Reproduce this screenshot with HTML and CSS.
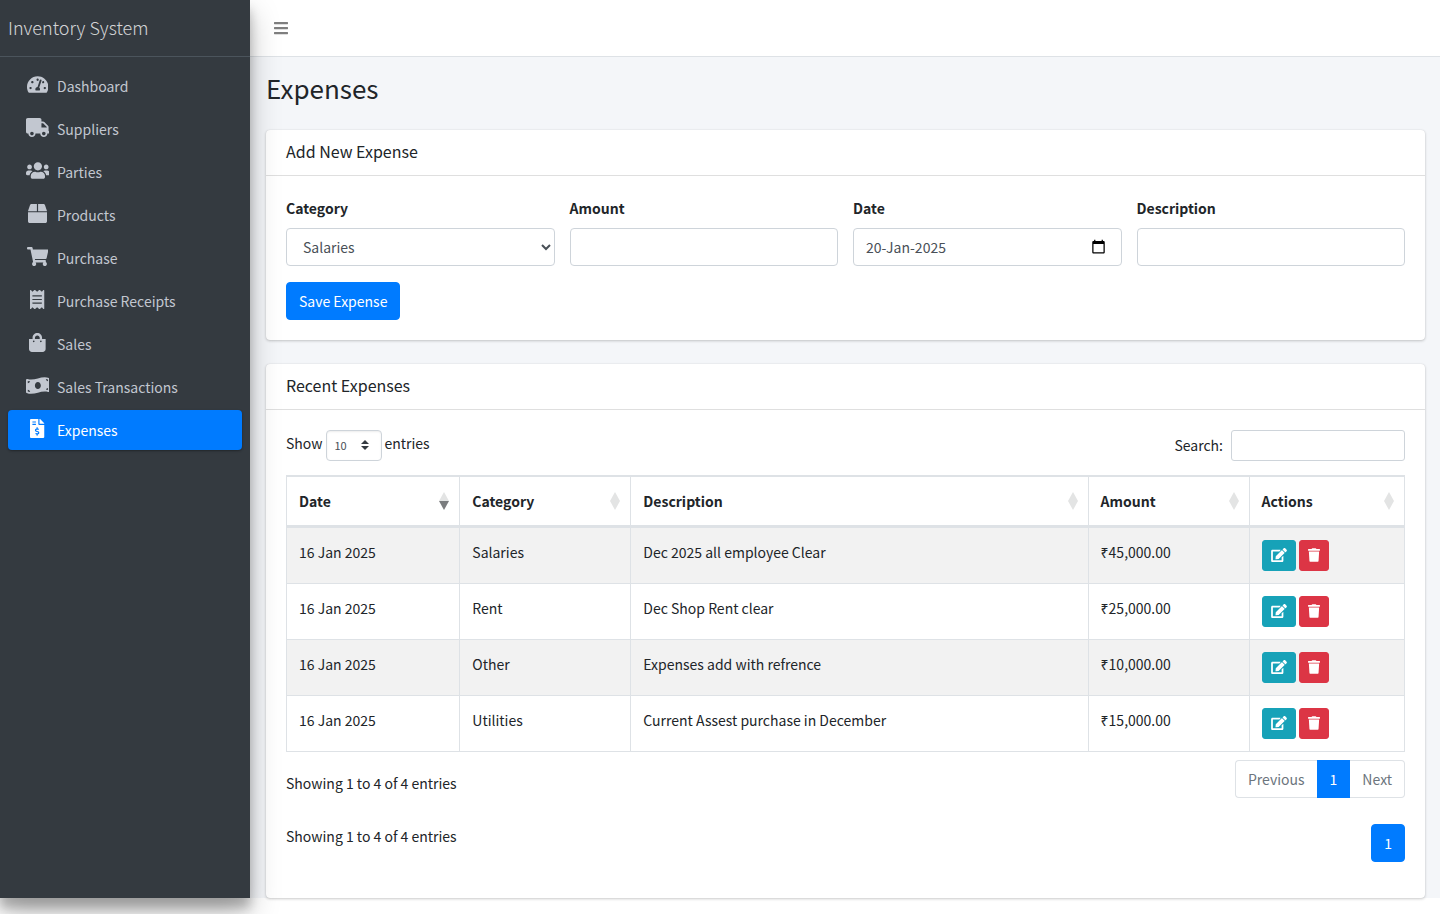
FILE: index.html
```html
<!DOCTYPE html>
<html lang="en">
<head>
<meta charset="utf-8">
<meta name="viewport" content="width=device-width, initial-scale=1">
<title>Expenses - Inventory System</title>
<link rel="stylesheet" href="styles.css">
</head>
<body>
<svg class="sprite" aria-hidden="true">
  <symbol id="i-edit" viewBox="0 0 576 512"><path d="M402.6 83.2l90.2 90.2c3.8 3.8 3.8 10 0 13.8L274.4 405.6l-92.8 10.3c-12.4 1.4-22.9-9.1-21.5-21.5l10.3-92.8L388.8 83.2c3.8-3.8 10-3.8 13.8 0zm162-22.9l-48.8-48.8c-15.2-15.2-39.9-15.2-55.2 0l-35.4 35.4c-3.8 3.8-3.8 10 0 13.8l90.2 90.2c3.8 3.8 10 3.8 13.8 0l35.4-35.4c15.2-15.3 15.2-40 0-55.2zM384 346.2V448H64V128h229.8c3.2 0 6.2-1.3 8.5-3.5l40-40c7.6-7.6 2.2-20.5-8.5-20.5H48C21.5 64 0 85.5 0 112v352c0 26.5 21.5 48 48 48h352c26.5 0 48-21.5 48-48V306.2c0-10.7-12.9-16-20.5-8.5l-40 40c-2.2 2.3-3.5 5.3-3.5 8.5z"/></symbol>
  <symbol id="i-trash" viewBox="0 0 448 512"><path d="M432 32H312l-9.4-18.7A24 24 0 0 0 281.1 0H166.8a23.72 23.72 0 0 0-21.4 13.3L136 32H16A16 16 0 0 0 0 48v32a16 16 0 0 0 16 16h416a16 16 0 0 0 16-16V48a16 16 0 0 0-16-16zM32 128l21.2 339a48 48 0 0 0 47.9 45h245.8a48 48 0 0 0 47.9-45L416 128z"/></symbol>
  <symbol id="i-sort" viewBox="0 0 10 18"><path class="up" d="M5 0L10 9H0z"/><path class="down" d="M0 9H10L5 18z"/></symbol>
</svg>
<div class="wrapper">
  <aside class="sidebar">
    <a class="brand" href="#">Inventory System</a>
    <nav class="menu">
      <a class="menu-link" href="#"><span class="menu-icon"><svg viewBox="0 0 576 512"><path d="M288 32C128.94 32 0 160.94 0 320c0 52.8 14.25 102.26 39.06 144.8 5.61 9.62 16.3 15.2 27.44 15.2h443c11.14 0 21.83-5.58 27.44-15.2C561.75 422.26 576 372.8 576 320c0-159.06-128.94-288-288-288zm0 64c14.71 0 26.58 10.13 30.32 23.65-1.11 2.26-2.64 4.23-3.45 6.67l-9.22 27.67c-5.13 3.49-10.97 6.01-17.64 6.01-17.67 0-32-14.33-32-32S270.33 96 288 96zM96 384c-17.67 0-32-14.33-32-32s14.33-32 32-32 32 14.33 32 32-14.33 32-32 32zm48-160c-17.67 0-32-14.33-32-32s14.33-32 32-32 32 14.33 32 32-14.33 32-32 32zm246.77-72.41l-61.33 184C343.13 347.33 352 364.54 352 384c0 11.72-3.38 22.55-8.88 32H232.88c-5.5-9.45-8.88-20.28-8.88-32 0-33.94 26.5-61.43 59.9-63.59l61.34-184.01c4.17-12.56 17.73-19.45 30.36-15.17 12.57 4.19 19.35 17.79 15.17 30.36zm14.66 57.2l15.52-46.55c3.47-1.29 7.13-2.23 11.05-2.23 17.67 0 32 14.33 32 32s-14.33 32-32 32c-11.38-.01-20.89-6.28-26.57-15.22zM480 384c-17.67 0-32-14.33-32-32s14.33-32 32-32 32 14.33 32 32-14.33 32-32 32z"/></svg></span>Dashboard</a>
      <a class="menu-link" href="#"><span class="menu-icon"><svg viewBox="0 0 640 512"><path d="M624 352h-16V243.9c0-12.7-5.1-24.9-14.1-33.9L494 110.1c-9-9-21.2-14.1-33.9-14.1H416V48c0-26.5-21.5-48-48-48H48C21.5 0 0 21.5 0 48v320c0 26.5 21.5 48 48 48h16c0 53 43 96 96 96s96-43 96-96h128c0 53 43 96 96 96s96-43 96-96h48c8.8 0 16-7.2 16-16v-32c0-8.8-7.2-16-16-16zM160 464c-26.5 0-48-21.5-48-48s21.5-48 48-48 48 21.5 48 48-21.5 48-48 48zm320 0c-26.5 0-48-21.5-48-48s21.5-48 48-48 48 21.5 48 48-21.5 48-48 48zm80-208H416V144h44.1l99.9 99.9V256z"/></svg></span>Suppliers</a>
      <a class="menu-link" href="#"><span class="menu-icon"><svg viewBox="0 0 640 512"><path d="M96 224c35.3 0 64-28.7 64-64s-28.7-64-64-64-64 28.7-64 64 28.7 64 64 64zm448 0c35.3 0 64-28.7 64-64s-28.7-64-64-64-64 28.7-64 64 28.7 64 64 64zm32 32h-64c-17.6 0-33.5 7.1-45.1 18.6 40.3 22.1 68.9 62 75.1 109.4h66c17.7 0 32-14.3 32-32v-32c0-35.3-28.7-64-64-64zm-256 0c61.9 0 112-50.1 112-112S381.9 32 320 32 208 82.1 208 144s50.1 112 112 112zm76.8 32h-8.3c-20.8 10-43.9 16-68.5 16s-47.6-6-68.5-16h-8.3C179.6 288 128 339.6 128 403.2V432c0 26.5 21.5 48 48 48h288c26.5 0 48-21.5 48-48v-28.8c0-63.6-51.6-115.2-115.2-115.2zm-223.7-13.4C161.5 263.1 145.6 256 128 256H64c-35.3 0-64 28.7-64 64v32c0 17.7 14.3 32 32 32h65.9c6.3-47.4 34.9-87.3 75.2-109.4z"/></svg></span>Parties</a>
      <a class="menu-link" href="#"><span class="menu-icon"><svg viewBox="0 0 512 512"><path d="M509.5 184.6L458.9 32.8C452.4 13.2 434.1 0 413.4 0H272v192h238.7c-.4-2.5-.4-5-1.2-7.4zM240 0H98.6c-20.7 0-39 13.2-45.5 32.8L2.5 184.6c-.8 2.4-.8 4.9-1.2 7.4H240V0zM0 224v240c0 26.5 21.5 48 48 48h416c26.5 0 48-21.5 48-48V224H0z"/></svg></span>Products</a>
      <a class="menu-link" href="#"><span class="menu-icon"><svg viewBox="0 0 576 512"><path d="M528.12 301.319l47.273-208C578.806 78.301 567.391 64 551.99 64H159.208l-9.166-44.81C147.758 8.021 137.93 0 126.529 0H24C10.745 0 0 10.745 0 24v16c0 13.255 10.745 24 24 24h69.883l70.248 343.435C147.325 417.1 136 435.222 136 456c0 30.928 25.072 56 56 56s56-25.072 56-56c0-15.674-6.447-29.835-16.824-40h209.647C430.447 426.165 424 440.326 424 456c0 30.928 25.072 56 56 56s56-25.072 56-56c0-22.172-12.888-41.332-31.579-50.405l5.517-24.276c3.413-15.018-8.002-29.319-23.403-29.319H218.117l-6.545-32h293.145c11.206 0 20.92-7.754 23.403-18.681z"/></svg></span>Purchase</a>
      <a class="menu-link" href="#"><span class="menu-icon"><svg viewBox="0 0 384 512"><path d="M358.4 3.2L320 48 265.6 3.2a15.9 15.9 0 0 0-19.2 0L192 48 137.6 3.2a15.9 15.9 0 0 0-19.2 0L64 48 25.6 3.2C15-4.7 0 2.8 0 16v480c0 13.2 15 20.7 25.6 12.8L64 464l54.4 44.8a15.9 15.9 0 0 0 19.2 0L192 464l54.4 44.8a15.9 15.9 0 0 0 19.2 0L320 464l38.4 44.8c10.5 7.9 25.6.4 25.6-12.8V16c0-13.2-15-20.7-25.6-12.8zM320 360c0 4.4-3.6 8-8 8H72c-4.4 0-8-3.6-8-8v-16c0-4.4 3.6-8 8-8h240c4.4 0 8 3.6 8 8v16zm0-96c0 4.4-3.6 8-8 8H72c-4.4 0-8-3.6-8-8v-16c0-4.4 3.6-8 8-8h240c4.4 0 8 3.6 8 8v16zm0-96c0 4.4-3.6 8-8 8H72c-4.4 0-8-3.6-8-8v-16c0-4.4 3.6-8 8-8h240c4.4 0 8 3.6 8 8v16z"/></svg></span>Purchase Receipts</a>
      <a class="menu-link" href="#"><span class="menu-icon"><svg viewBox="0 0 448 512"><path d="M352 160v-32C352 57.42 294.579 0 224 0 153.42 0 96 57.42 96 128v32H0v272c0 44.183 35.817 80 80 80h288c44.183 0 80-35.817 80-80V160h-96zm-192-32c0-35.29 28.71-64 64-64s64 28.71 64 64v32H160v-32zm160 120c-13.255 0-24-10.745-24-24s10.745-24 24-24 24 10.745 24 24-10.745 24-24 24zm-192 0c-13.255 0-24-10.745-24-24s10.745-24 24-24 24 10.745 24 24-10.745 24-24 24z"/></svg></span>Sales</a>
      <a class="menu-link" href="#"><span class="menu-icon"><svg viewBox="0 0 640 512"><path d="M621.16 54.46C582.37 38.19 543.55 32 504.75 32c-123.17-.01-246.33 62.34-369.5 62.34-30.89 0-61.76-3.92-92.65-13.72-3.47-1.1-6.95-1.62-10.35-1.62C15.04 79 0 92.32 0 110.81v317.26c0 12.63 7.23 24.6 18.84 29.46C57.63 473.81 96.45 480 135.25 480c123.17 0 246.34-62.35 369.51-62.35 30.89 0 61.76 3.92 92.65 13.72 3.47 1.1 6.95 1.62 10.35 1.62 17.21 0 32.25-13.32 32.25-31.81V83.93c-.01-12.64-7.24-24.6-18.85-29.47zM48 132.22c20.12 5.04 41.12 7.57 62.72 8.93C104.84 170.54 79 192.69 48 192.69v-60.47zm0 285v-47.78c34.37 0 62.18 27.27 63.71 61.4-22.53-1.81-43.59-6.31-63.71-13.62zM320 352c-44.19 0-80-42.99-80-96 0-53.02 35.82-96 80-96s80 42.98 80 96c0 53.03-35.83 96-80 96zm272 27.78c-17.52-4.39-35.71-6.85-54.32-8.44 5.87-26.08 27.5-45.88 54.32-49.28v57.72zm0-236.11c-30.89-3.91-54.86-29.7-55.81-61.55 19.54 2.17 38.09 6.23 55.81 12.66v48.89z"/></svg></span>Sales Transactions</a>
      <a class="menu-link active" href="#" aria-current="page"><span class="menu-icon"><svg viewBox="0 0 384 512"><path d="M377 105L279.1 7c-4.5-4.5-10.6-7-17-7H256v128h128v-6.1c0-6.3-2.5-12.4-7-16.9zm-153 31V0H24C10.7 0 0 10.7 0 24v464c0 13.3 10.7 24 24 24h336c13.3 0 24-10.7 24-24V160H248c-13.2 0-24-10.8-24-24zM64 72c0-4.42 3.58-8 8-8h80c4.42 0 8 3.58 8 8v16c0 4.42-3.58 8-8 8H72c-4.42 0-8-3.58-8-8V72zm0 80v-16c0-4.42 3.58-8 8-8h80c4.42 0 8 3.58 8 8v16c0 4.42-3.58 8-8 8H72c-4.42 0-8-3.58-8-8zm144 263.88V440c0 4.42-3.58 8-8 8h-16c-4.42 0-8-3.58-8-8v-24.29c-11.29-.58-22.27-4.52-31.37-11.35-3.9-2.93-4.1-8.77-.57-12.14l11.75-11.21c2.77-2.64 6.89-2.76 10.13-.73 3.87 2.42 8.26 3.72 12.82 3.72h28.11c6.5 0 11.8-5.92 11.8-13.19 0-5.95-3.61-11.19-8.77-12.73l-45-13.5c-18.59-5.58-31.58-23.42-31.58-43.39 0-24.52 19.05-44.44 42.67-45.07V232c0-4.42 3.58-8 8-8h16c4.42 0 8 3.58 8 8v24.29c11.29.58 22.27 4.51 31.37 11.35 3.9 2.93 4.1 8.77.57 12.14l-11.75 11.21c-2.77 2.64-6.89 2.76-10.13.73-3.87-2.43-8.26-3.72-12.82-3.72h-28.11c-6.5 0-11.8 5.92-11.8 13.19 0 5.95 3.61 11.19 8.77 12.73l45 13.5c18.59 5.58 31.58 23.42 31.58 43.39 0 24.53-19.05 44.44-42.67 45.07z"/></svg></span>Expenses</a>
    </nav>
  </aside>
  <div class="page">
    <header class="topbar">
      <button class="toggle" type="button" aria-label="Toggle menu"><svg viewBox="0 0 448 512"><path d="M16 132h416c8.800 0 16-7.200 16-16V76c0-8.800-7.200-16-16-16H16C7.200 60 0 67.200 0 76v40c0 8.800 7.200 16 16 16zm0 160h416c8.800 0 16-7.200 16-16v-40c0-8.800-7.200-16-16-16H16c-8.800 0-16 7.200-16 16v40c0 8.800 7.200 16 16 16zm0 160h416c8.800 0 16-7.200 16-16v-40c0-8.800-7.200-16-16-16H16c-8.800 0-16 7.200-16 16v40c0 8.800 7.200 16 16 16z"/></svg></button>
    </header>
    <main class="content">
      <h1 class="page-title">Expenses</h1>
      <section class="card">
        <h2 class="card-header">Add New Expense</h2>
        <form class="card-body">
          <div class="fields">
            <div class="field">
              <label for="category">Category</label>
              <select id="category" class="control"><option>Salaries</option><option>Rent</option><option>Utilities</option><option>Other</option></select>
            </div>
            <div class="field">
              <label for="amount">Amount</label>
              <input id="amount" class="control" type="text" inputmode="decimal">
            </div>
            <div class="field">
              <label for="date">Date</label>
              <div class="date-box">
                <input id="date" class="control" type="text" value="20-Jan-2025">
                <button class="date-button" type="button" aria-label="Open calendar"><svg viewBox="0 0 24 24"><path d="M20 3h-1V1h-2v2H7V1H5v2H4c-1.100 0-2 .9-2 2v16c0 1.100.9 2 2 2h16c1.100 0 2-.9 2-2V5c0-1.100-.9-2-2-2zm0 18H4V8h16v13z"/></svg></button>
              </div>
            </div>
            <div class="field">
              <label for="description">Description</label>
              <input id="description" class="control" type="text">
            </div>
          </div>
          <button class="btn-primary" type="button">Save Expense</button>
        </form>
      </section>

      <section class="card">
        <h2 class="card-header">Recent Expenses</h2>
        <div class="card-body recent">
          <div class="table-tools">
            <label class="length">Show
              <span class="length-box">
                <select class="length-select"><option>10</option><option>25</option><option>50</option></select>
                <svg class="length-caret" viewBox="0 0 4 5"><path d="M2 0L0 2h4zm0 5L0 3h4z"/></svg>
              </span>
              entries</label>
            <label class="search">Search: <input class="search-input" type="search"></label>
          </div>
          <table class="expenses">
            <colgroup><col class="c-date"><col class="c-category"><col class="c-description"><col class="c-amount"><col class="c-actions"></colgroup>
            <thead>
              <tr>
                <th scope="col" aria-sort="descending"><div class="th">Date<svg class="sort desc"><use href="#i-sort"/></svg></div></th>
                <th scope="col"><div class="th">Category<svg class="sort"><use href="#i-sort"/></svg></div></th>
                <th scope="col"><div class="th">Description<svg class="sort"><use href="#i-sort"/></svg></div></th>
                <th scope="col"><div class="th">Amount<svg class="sort"><use href="#i-sort"/></svg></div></th>
                <th scope="col"><div class="th">Actions<svg class="sort"><use href="#i-sort"/></svg></div></th>
              </tr>
            </thead>
            <tbody>
              <tr><td>16 Jan 2025</td><td>Salaries</td><td>Dec 2025 all employee Clear</td><td>₹45,000.00</td><td><div class="actions"><button class="btn-edit" type="button" aria-label="Edit"><svg><use href="#i-edit"/></svg></button><button class="btn-delete" type="button" aria-label="Delete"><svg><use href="#i-trash"/></svg></button></div></td></tr>
              <tr><td>16 Jan 2025</td><td>Rent</td><td>Dec Shop Rent clear</td><td>₹25,000.00</td><td><div class="actions"><button class="btn-edit" type="button" aria-label="Edit"><svg><use href="#i-edit"/></svg></button><button class="btn-delete" type="button" aria-label="Delete"><svg><use href="#i-trash"/></svg></button></div></td></tr>
              <tr><td>16 Jan 2025</td><td>Other</td><td>Expenses add with refrence</td><td>₹10,000.00</td><td><div class="actions"><button class="btn-edit" type="button" aria-label="Edit"><svg><use href="#i-edit"/></svg></button><button class="btn-delete" type="button" aria-label="Delete"><svg><use href="#i-trash"/></svg></button></div></td></tr>
              <tr><td>16 Jan 2025</td><td>Utilities</td><td>Current Assest purchase in December</td><td>₹15,000.00</td><td><div class="actions"><button class="btn-edit" type="button" aria-label="Edit"><svg><use href="#i-edit"/></svg></button><button class="btn-delete" type="button" aria-label="Delete"><svg><use href="#i-trash"/></svg></button></div></td></tr>
            </tbody>
          </table>
          <div class="table-foot first">
            <p class="info">Showing 1 to 4 of 4 entries</p>
            <nav class="pagination" aria-label="Table pages"><a class="page-link" href="#">Previous</a><a class="page-link current" href="#">1</a><a class="page-link" href="#">Next</a></nav>
          </div>
          <div class="table-foot second">
            <p class="info">Showing 1 to 4 of 4 entries</p>
            <nav class="pagination" aria-label="Pages"><a class="page-link current" href="#">1</a></nav>
          </div>
        </div>
      </section>
    </main>
  </div>
</div>
</body>
</html>
```

FILE: styles.css
```css
*, *::before, *::after { box-sizing: border-box; }

body {
  margin: 0;
  background: #fff;
  color: #212529;
  font-family: "Noto Sans CJK SC", "Noto Sans", sans-serif;
  font-size: 14px;
  line-height: 24px;
}

button, input, select { font: inherit; color: inherit; }
button { cursor: pointer; }
a { text-decoration: none; }
svg { display: block; fill: currentColor; }
.sprite { position: absolute; width: 0; height: 0; }

.wrapper { display: flex; align-items: stretch; margin-bottom: 16px; }

/* Sidebar */
.sidebar {
  position: relative;
  z-index: 2;
  flex: 0 0 250px;
  background: #343a40;
  box-shadow: 0 14px 28px rgba(0, 0, 0, .25), 0 10px 10px rgba(0, 0, 0, .22);
}
.brand {
  display: block;
  padding: 15px 8px 17px;
  border-bottom: 1px solid #4b545c;
  color: rgba(255, 255, 255, .8);
  font-size: 18px;
  font-weight: 300;
}
.menu { display: flex; flex-direction: column; gap: 3px; padding: 9px 8px; }
.menu-link {
  display: flex;
  align-items: center;
  gap: 6px;
  padding: 8px 16px;
  border-radius: 4px;
  color: #c2c7d0;
}
.menu-link.active {
  background: #007bff;
  color: #fff;
  box-shadow: 0 1px 3px rgba(0, 0, 0, .12), 0 1px 2px rgba(0, 0, 0, .24);
}
.menu-icon { display: flex; justify-content: center; width: 27px; padding-bottom: 3px; }
.menu-icon svg { height: 19px; max-width: 24px; }

/* Page */
.page { flex: 1; min-width: 0; background: #f4f6f9; }
.topbar {
  padding: 8px;
  background: #fff;
  border-bottom: 1px solid #dee2e6;
}
.toggle {
  display: flex;
  align-items: center;
  height: 40px;
  padding: 0 16px;
  border: 0;
  background: none;
  color: rgba(0, 0, 0, .5);
}
.toggle svg { width: 14px; height: 16px; }
.content { padding: 0 15px 0 16px; }
.page-title {
  margin: 0;
  padding: 13px 0 25px;
  font-size: 26px;
  font-weight: 400;
  line-height: 35px;
}

/* Cards */
.card {
  border-radius: 4px;
  background: #fff;
  box-shadow: 0 0 1px rgba(0, 0, 0, .13), 0 1px 3px rgba(0, 0, 0, .2);
}
.card + .card { margin-top: 24px; }
.card-header {
  margin: 0;
  padding: 10px 20px 12px;
  border-bottom: 1px solid rgba(0, 0, 0, .125);
  font-size: 16px;
  font-weight: 400;
  line-height: 23px;
}
.card-body { padding: 20px; }
.card-body.recent { padding-bottom: 36px; }

/* Form */
.fields { display: grid; grid-template-columns: repeat(4, 1fr); gap: 15px; margin-bottom: 16px; }
.field { display: flex; flex-direction: column; gap: 8px; min-width: 0; }
.field > label { font-weight: 700; }
.control {
  width: 100%;
  height: 38px;
  padding: 6px 12px;
  border: 1px solid #ced4da;
  border-radius: 4px;
  background: #fff;
  color: #495057;
}
.date-box { position: relative; }
.date-button {
  position: absolute;
  top: 11px;
  right: 16px;
  padding: 0;
  border: 0;
  background: none;
  color: #000;
}
.date-button svg { width: 15px; height: 15px; }
.btn-primary {
  display: block;
  padding: 6px 12px;
  border: 1px solid #007bff;
  border-radius: 4px;
  background: #007bff;
  color: #fff;
}

/* Table controls */
.table-tools { display: flex; justify-content: space-between; margin-bottom: 14px; }
.length { display: flex; gap: 3px; line-height: 27px; }
.length-box { position: relative; }
.length-select {
  display: block;
  width: 56px;
  height: 31px;
  padding: 0 8px;
  border: 1px solid #ced4da;
  border-radius: 4px;
  background: #fff;
  color: #495057;
  font-size: 11px;
  appearance: none;
  box-shadow: inset 0 1px 2px rgba(0, 0, 0, .075);
}
.length-caret {
  position: absolute;
  top: 10px;
  right: 13px;
  width: 8px;
  height: 10px;
  color: #343a40;
  pointer-events: none;
}
.search { display: flex; gap: 8px; line-height: 30px; }
.search-input {
  width: 174px;
  height: 31px;
  padding: 4px 8px;
  border: 1px solid #ced4da;
  border-radius: 3px;
  background: #fff;
}

/* Table */
.expenses {
  width: 100%;
  table-layout: fixed;
  border: 1px solid #dee2e6;
  border-right: 0;
  border-bottom: 0;
  border-spacing: 0;
}
.c-date { width: 15.5%; }
.c-category { width: 15.3%; }
.c-description { width: 40.9%; }
.c-amount { width: 14.4%; }
.c-actions { width: 13.9%; }
.expenses th, .expenses td {
  padding: 12px;
  border-right: 1px solid #dee2e6;
  border-bottom: 1px solid #dee2e6;
  text-align: left;
  vertical-align: top;
}
.expenses th {
  padding-right: 10px;
  border-top: 1px solid #dee2e6;
  border-bottom-width: 3px;
  font-weight: 700;
}
.expenses tbody tr:nth-child(odd) { background: #f2f2f2; }
.th { display: flex; align-items: center; justify-content: space-between; }
.sort { width: 10px; height: 18px; color: #e3e4e4; }
.sort.desc { --down: #7a7c7e; }
.down { fill: var(--down, currentColor); }
.actions { display: flex; gap: 3px; }
.btn-edit, .btn-delete {
  height: 31px;
  padding: 0 8px 2px;
  border: 1px solid;
  border-radius: 3px;
}
.btn-edit { border-color: #17a2b8; background: #17a2b8; }
.btn-delete { border-color: #dc3545; background: #dc3545; }
.actions svg { height: 14px; fill: #fff; }
.btn-edit svg { width: 16px; }
.btn-delete svg { width: 12px; }

/* Table footer */
.table-foot { display: flex; justify-content: space-between; align-items: flex-start; }
.table-foot.first { margin-top: 8px; }
.table-foot.first .info { padding-top: 11px; }
.table-foot.second { margin-top: 26px; }
.info { margin: 0; }
.pagination { display: flex; }
.page-link {
  padding: 6px 12px;
  border: 1px solid #dee2e6;
  background: #fff;
  color: #6c757d;
}
.page-link:first-child { border-right: 0; border-radius: 4px 0 0 4px; }
.page-link:last-child { border-left: 0; border-radius: 0 4px 4px 0; }
.page-link:only-child { border-radius: 4px; }
.page-link.current { border: 1px solid #007bff; background: #007bff; color: #fff; }
```
